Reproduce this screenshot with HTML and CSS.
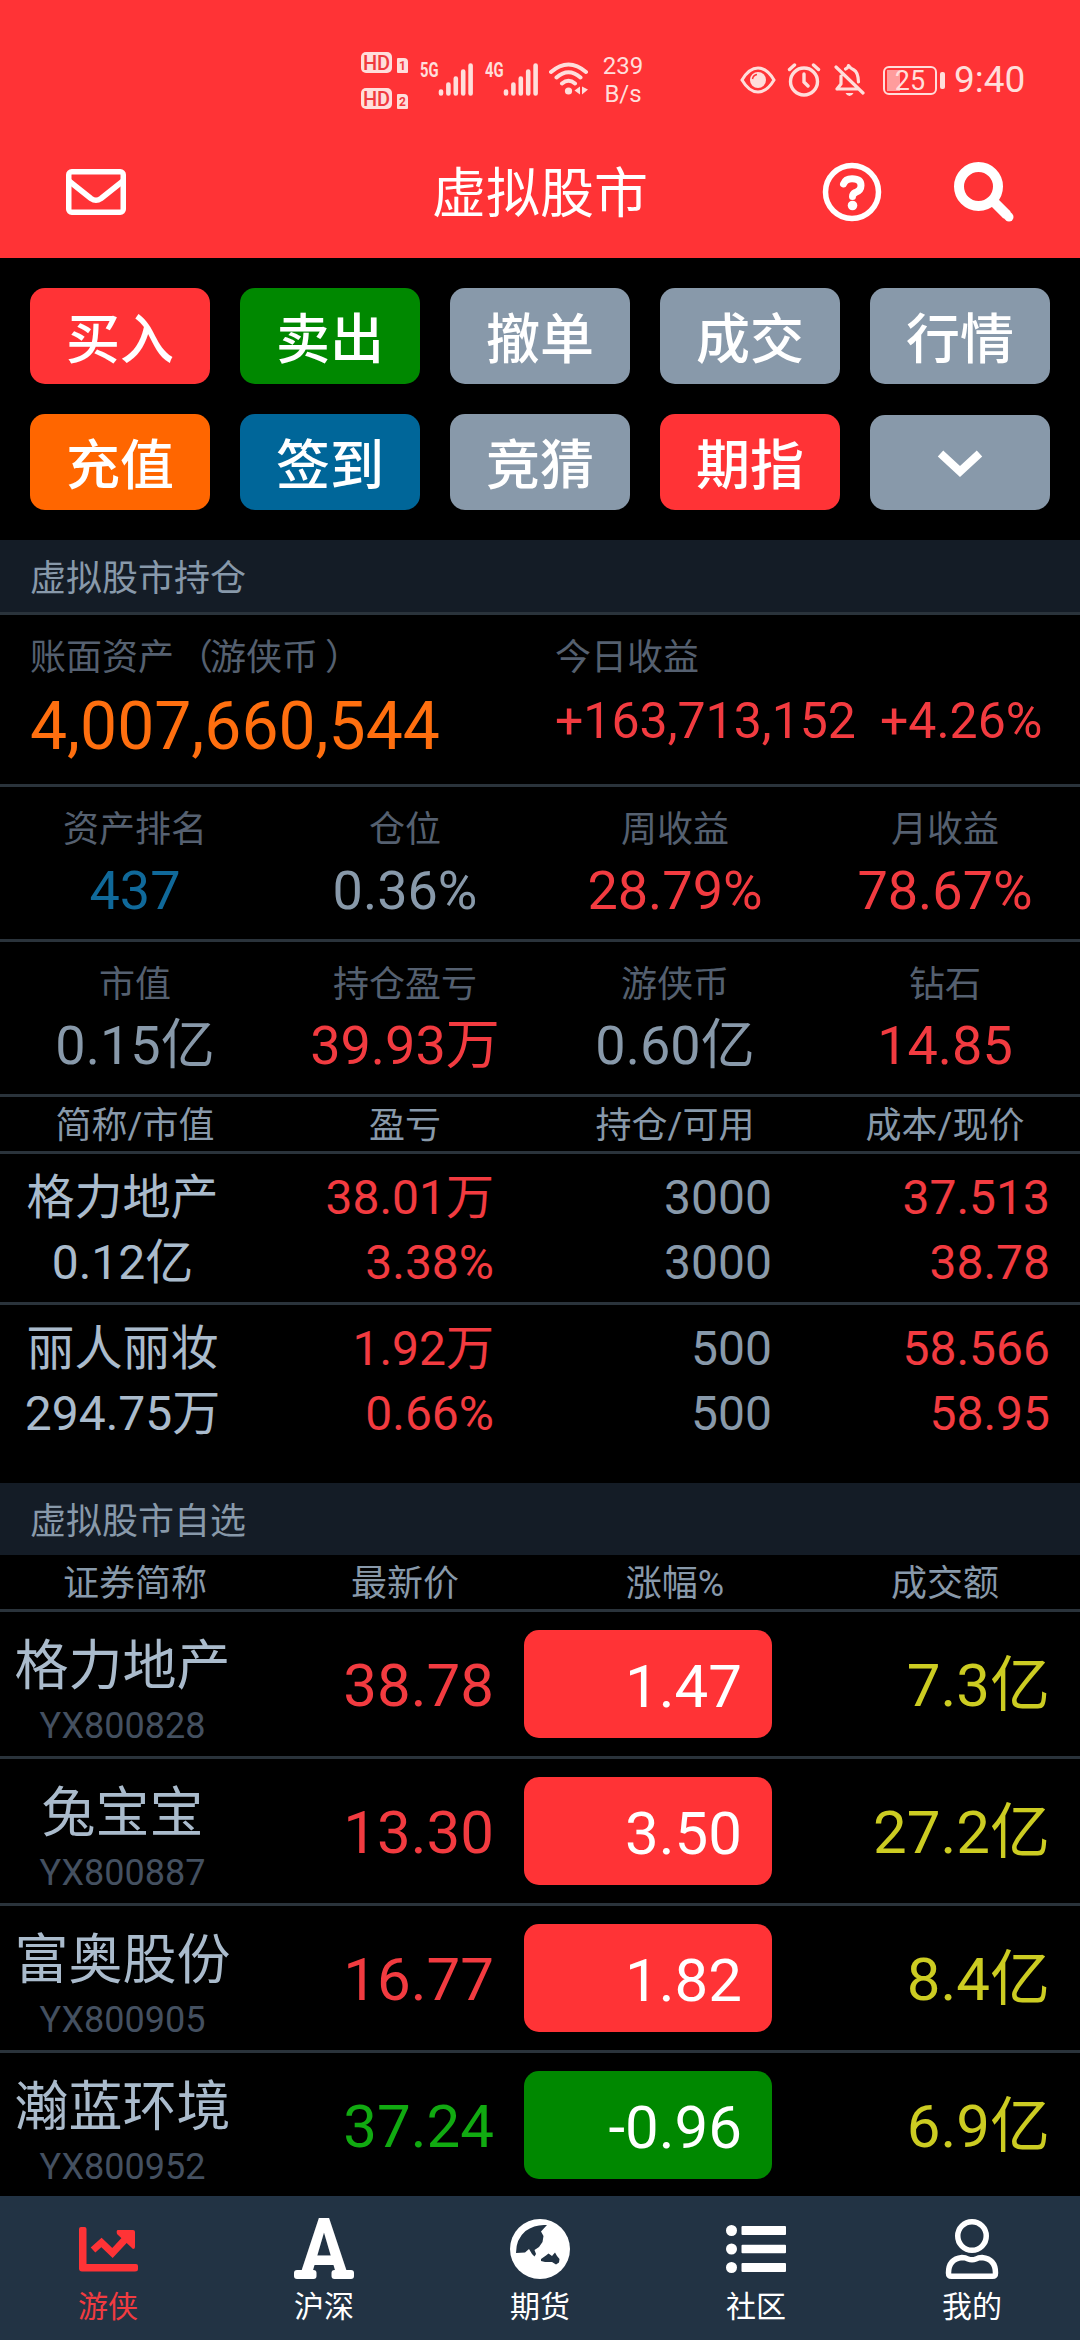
FILE: index.html
```html
<!DOCTYPE html>
<html lang="zh-CN">
<head>
<meta charset="utf-8">
<title>虚拟股市</title>
<link rel="stylesheet" href="styles.css">
</head>
<body>
<div class="app">
  <header class="header">
    <div class="status">
      <div class="sims">
        <div class="sim"><span class="hd">HD</span><span class="slot">1</span></div>
        <div class="sim"><span class="hd">HD</span><span class="slot">2</span></div>
      </div>
      <div class="signal"><span class="net">5G</span>
        <svg width="36" height="34" viewBox="0 0 36 34"><path d="M3 31.5v-2M10.4 31.5v-9M17.8 31.5v-15M25.2 31.5v-22M32.6 31.5v-28"/></svg></div>
      <div class="signal"><span class="net">4G</span>
        <svg width="36" height="34" viewBox="0 0 36 34"><path d="M3 31.5v-2M10.4 31.5v-9M17.8 31.5v-15M25.2 31.5v-22M32.6 31.5v-28"/></svg></div>
      <svg class="wifi" width="40" height="34" viewBox="0 0 40 34"><g fill="none" stroke="#ffdedb" stroke-width="4" stroke-linecap="round"><path d="M2 10Q19.500 -5 37 10M7.500 15.500Q19.500 5 31.500 15.500M13 21.500Q19.500 16 26 21.500"/></g><circle cx="19.500" cy="29" r="3.600" fill="#ffdedb"/><path d="M31 24.500v8l-5.500-4zM33 24.500v8l6-5z" fill="#ffdedb"/></svg>
      <div class="speed">239<br>B/s</div>
      <svg class="eye" width="36" height="28" viewBox="0 0 36 28"><path d="M2 14Q9 2 18 2T34 14Q27 26 18 26T2 14z" fill="none" stroke="#ffdedb" stroke-width="3"/><circle cx="18" cy="14" r="8" fill="#ffdedb"/><path d="M12.500 13q.8-4 4.500-4.500" fill="none" stroke="#ff3336" stroke-width="1.500"/></svg>
      <svg class="alarm" width="34" height="34" viewBox="0 0 34 34"><g fill="none" stroke="#ffdedb" stroke-width="3.400" stroke-linecap="round"><circle cx="17" cy="18.500" r="13.500"/><path d="M2.500 6.500L7.500 2M31.500 6.500L26.500 2M17 11v8l4 4"/></g></svg>
      <svg class="bell" width="32" height="34" viewBox="0 0 32 34"><g fill="none" stroke="#ffdedb" stroke-width="3.200" stroke-linecap="round" stroke-linejoin="round"><path d="M3 26h22M3 26l4-5V13M11.500 6Q14 5 14.500 2.500Q16 5 20 7Q24 9 24.500 19M2 4L29 30"/></g><path d="M11.500 30h8q-1.500 3-4 3t-4-3z" fill="#ffdedb"/></svg>
      <div class="battery"><span>25</span></div>
      <div class="clock">9:40</div>
    </div>
    <div class="bar">
      <svg class="mail" width="60" height="46" viewBox="0 0 60 46"><g fill="none" stroke="#fff" stroke-width="5.500" stroke-linejoin="round"><rect x="2.750" y="2.750" width="54.500" height="40.500" rx="3"/><path d="M3 12L25 29.500Q30 33 35 29.500L57 12"/></g></svg>
      <h1>虚拟股市</h1>
      <svg class="help" width="60" height="60" viewBox="0 0 60 60"><circle cx="30" cy="30" r="26.500" fill="none" stroke="#fff" stroke-width="5.500"/><path d="M21.500 22Q23.500 16.800 30 16.800Q39 16.800 39 23.500Q39 28.500 33.500 30.500Q30.500 32 30.500 34.500" fill="none" stroke="#fff" stroke-width="7" stroke-linecap="round"/><circle cx="30.500" cy="43.500" r="4.800" fill="#fff"/></svg>
      <svg class="search" width="61" height="61" viewBox="0 0 61 61"><g fill="none" stroke="#fff"><circle cx="24.500" cy="24.500" r="19.500" stroke-width="10"/><path d="M40 40L53 53" stroke-width="10"/><path d="M52 52L55 55" stroke-width="9" stroke-linecap="round"/></g></svg>
    </div>
  </header>

  <section class="actions">
    <a class="btn red">买入</a><a class="btn green">卖出</a><a class="btn">撤单</a><a class="btn">成交</a><a class="btn">行情</a>
    <a class="btn orange">充值</a><a class="btn blue">签到</a><a class="btn">竞猜</a><a class="btn red">期指</a>
    <a class="btn more"><svg width="50" height="34" viewBox="0 0 50 34"><path d="M5.500 7.500L25 25.500L44.500 7.500" fill="none" stroke="#fff" stroke-width="8"/></svg></a>
  </section>

  <h2 class="section ruled">虚拟股市持仓</h2>
  <section class="summary">
    <div><div class="label">账面资产<span class="open">（</span>游侠币<span class="close">）</span></div><div class="total">4,007,660,544</div></div>
    <div><div class="label">今日收益</div><div class="today"><span>+163,713,152</span><span>+4.26%</span></div></div>
  </section>
  <section class="stats">
    <div><div class="label">资产排名</div><div class="value t-blue">437</div></div>
    <div><div class="label">仓位</div><div class="value">0.36%</div></div>
    <div><div class="label">周收益</div><div class="value t-red">28.79%</div></div>
    <div><div class="label">月收益</div><div class="value t-red">78.67%</div></div>
  </section>
  <section class="stats">
    <div><div class="label">市值</div><div class="value">0.15亿</div></div>
    <div><div class="label">持仓盈亏</div><div class="value t-red">39.93万</div></div>
    <div><div class="label">游侠币</div><div class="value">0.60亿</div></div>
    <div><div class="label">钻石</div><div class="value t-red">14.85</div></div>
  </section>
  <div class="thead"><span>简称/市值</span><span>盈亏</span><span>持仓/可用</span><span>成本/现价</span></div>
  <section class="holdings">
    <div class="holding"><div class="name">格力地产<br>0.12亿</div><div class="t-red">38.01万<br>3.38%</div><div>3000<br>3000</div><div class="t-red">37.513<br>38.78</div></div>
    <div class="holding"><div class="name">丽人丽妆<br>294.75万</div><div class="t-red">1.92万<br>0.66%</div><div>500<br>500</div><div class="t-red">58.566<br>58.95</div></div>
  </section>

  <h2 class="section">虚拟股市自选</h2>
  <div class="thead"><span>证券简称</span><span>最新价</span><span>涨幅%</span><span>成交额</span></div>
  <section class="watch">
    <div class="stock"><div class="name">格力地产<small>YX800828</small></div><div class="t-red">38.78</div><div class="pct red">1.47</div><div class="vol">7.3亿</div></div>
    <div class="stock"><div class="name">兔宝宝<small>YX800887</small></div><div class="t-red">13.30</div><div class="pct red">3.50</div><div class="vol">27.2亿</div></div>
    <div class="stock"><div class="name">富奥股份<small>YX800905</small></div><div class="t-red">16.77</div><div class="pct red">1.82</div><div class="vol">8.4亿</div></div>
    <div class="stock"><div class="name">瀚蓝环境<small>YX800952</small></div><div class="t-green">37.24</div><div class="pct green">-0.96</div><div class="vol">6.9亿</div></div>
  </section>

  <nav class="tabs">
    <a class="active"><svg viewBox="0 0 60 60"><path d="M3 8h3.500Q8.500 8 8.500 10V45H58Q60 45 60 47V50Q60 52.500 57 52.500H4Q1 52.500 1 49.500V10Q1 8 3 8z" fill="#ff3336"/><path d="M15 31L23.500 23.500L34.500 34L47 20.500" fill="none" stroke="#ff3336" stroke-width="7"/><path d="M40 11H55Q57 11 57 13V28Q57 30 55 30L39 15Q38 11 40 11z" fill="#ff3336"/></svg>游侠</a>
    <a><svg viewBox="0 0 60 60"><text class="letter" x="30" y="59" text-anchor="middle" textLength="50" lengthAdjust="spacingAndGlyphs">A</text><g fill="#fff"><rect x="0" y="51" width="22.500" height="9" rx="3"/><rect x="37.500" y="51" width="22.500" height="9" rx="3"/></g></svg>沪深</a>
    <a><svg viewBox="0 0 60 60"><circle cx="30" cy="30" r="30" fill="#fff"/><path d="M37 6Q25 5 15.500 12Q6 20 6 34L15 33.500L19 30L22 35L24.500 37.500L26 35L24.500 31L29 28L32.500 23L33.500 17L31 12.500Z M31 40L36 36.500L38.500 34.500L42 37L45 33.500L47 37L49.500 40L49 43.500L46 45.500L42 43L35 43L31 42Z" fill="#223344"/></svg>期货</a>
    <a><svg viewBox="0 0 60 60"><g fill="#fff"><circle cx="5.500" cy="11.500" r="5.500"/><circle cx="5.500" cy="30" r="5.500"/><circle cx="5.500" cy="48.500" r="5.500"/><rect x="15.500" y="7" width="44.500" height="9" rx="1"/><rect x="15.500" y="25.800" width="44.500" height="8.500" rx="1"/><rect x="15.500" y="44" width="44.500" height="9" rx="1"/></g></svg>社区</a>
    <a><svg viewBox="0 0 60 60"><g fill="none" stroke="#fff" stroke-width="5.500"><circle cx="30" cy="17" r="14.250"/><path d="M20 38.500Q23.500 38.500 26 40Q30 41.500 34 40Q36.500 38.500 40 38.500Q53.500 40 53.500 54Q53.500 57.300 50.500 57.300H9.500Q6.500 57.300 6.500 54Q6.500 40 20 38.500z"/></g></svg>我的</a>
  </nav>
</div>
</body>
</html>
```
FILE: styles.css
```css
* { box-sizing: border-box; }
body { margin: 0; background: #000; }
.app {
  width: 1080px; height: 2340px; overflow: hidden;
  display: flex; flex-direction: column;
  font-family: Roboto, "Noto Sans CJK SC", sans-serif;
  color: #8899aa; background: #000;
}
.header { height: 258px; flex: none; background: #ff3336; color: #fff; }
svg { display: block; flex: none; }

/* Status line */
.status { height: 128px; padding: 32px 0 0 361px; display: flex; align-items: center; color: #ffdedb; }
.sims { width: 48px; display: flex; flex-direction: column; gap: 15px; margin-right: 11px; }
.sim { display: flex; align-items: flex-end; gap: 5px; }
.hd { width: 31px; height: 21px; border-radius: 5px; background: #ffdedb; color: #ef3a3e; font: 500 20px/22px Roboto, sans-serif; text-align: center; }
.slot { width: 11px; height: 15px; border-radius: 1px 4px 1px 1px; background: #ffdedb; color: #ef3a3e; font: 700 12px/16px Roboto, sans-serif; text-align: center; }
.signal { display: flex; align-items: flex-start; width: 65px; margin-top: -4px; }
.signal svg { margin-left: -2px; margin-top: 1px; }
.signal path { stroke: #ffdedb; stroke-width: 4.600; stroke-linecap: round; }
.net { width: 20px; font-size: 20px; line-height: 18px; font-weight: 700; display: block; transform: scaleX(.74); transform-origin: left; white-space: nowrap; }
.wifi { margin-left: -1px; margin-top: -2px; }
.speed { width: 60px; margin-left: 4px; font-size: 24px; line-height: 28px; text-align: center; margin-right: 87px; }
.alarm { margin-left: 11px; }
.bell { margin-left: 13px; }
.battery { position: relative; width: 54px; height: 29px; margin-left: 17px; border: 2px solid #ffdedb; border-radius: 6px; font-size: 27px; line-height: 26px; text-align: center; background: linear-gradient(#ff9c9c, #ff9c9c) 2px 2px / 13px 21px no-repeat; }
.battery::after { content: ""; position: absolute; left: 55px; top: 4px; width: 5px; height: 17px; border-radius: 2px; background: #ffdedb; }
.clock { margin-left: 17px; font-size: 37px; line-height: 44px; }

/* Title bar */
.bar { height: 128px; display: flex; align-items: center; padding: 0 0 0 66px; }
.bar h1 { flex: none; width: 216px; margin: 6px 174px 0 306px; font-size: 54px; line-height: 72px; font-weight: 400; white-space: nowrap; }
.search { margin-left: 72px; }

/* Actions */
.actions { flex: none; display: grid; grid-template-columns: repeat(5, 180px); gap: 30px; padding: 30px; height: 282px; }
.btn { display: flex; align-items: center; justify-content: center; height: 96px; padding-top: 10px; border-radius: 15px; background: #8899aa; color: #fff; font-size: 54px; font-weight: 500; line-height: 86px; }
.red { background: #ff3336; }
.green { background: #008800; }
.orange { background: #ff6600; }
.blue { background: #006699; }
.more { height: 95px; margin-top: 1px; padding-top: 0; }

.section { flex: none; margin: 0; height: 72px; padding-left: 30px; background: #141c26; color: #8899aa; font-size: 36px; line-height: 79px; font-weight: 400; }
.ruled { height: 75px; border-bottom: 3px solid #2a333b; }
.label { color: #556070; font-size: 36px; line-height: 50px; height: 48px; }
.open { margin: 0 -3px 0 3px; }
.close { margin-left: 7px; }

.summary { flex: none; display: grid; grid-template-columns: 525px 1fr; height: 172px; padding: 18px 0 0 30px; border-bottom: 3px solid #2a333b; }
.total { color: #ff6f0f; font-size: 66px; line-height: 91px; white-space: nowrap; }
.today { display: flex; gap: 24px; color: #f23b40; font-size: 50px; line-height: 80px; }

.stats { flex: none; display: grid; grid-template-columns: repeat(4, 1fr); height: 155px; padding-top: 18px; text-align: center; border-bottom: 3px solid #2a333b; }
.value { font-size: 54px; line-height: 75px; }
.t-blue { color: #10699a; }
.t-red { color: #f23b40; }
.t-green { color: #11aa11; }

.thead { flex: none; display: grid; grid-template-columns: repeat(4, 1fr); height: 57px; text-align: center; font-size: 36px; line-height: 59px; border-bottom: 3px solid #2a333b; }

.holdings { flex: none; height: 329px; }
.holding { display: grid; grid-template-columns: 245px 249px 278px 278px; height: 151px; padding-top: 11px; font-size: 48px; line-height: 65px; text-align: right; }
.holding + .holding { border-top: 3px solid #2a333b; }
.name { text-align: center; color: #aabbcc; }
.holdings .holding:first-child { height: 148px; }

.watch { flex: none; }
.stock { display: grid; grid-template-columns: 245px 249px 30px 248px 278px; height: 147px; align-items: center; font-size: 60px; line-height: 80px; text-align: right; border-bottom: 3px solid #2a333b; }
.stock .name { padding-top: 13px; font-size: 54px; line-height: 70px; }
.name small { display: block; color: #445060; font-size: 36px; line-height: 48px; }
.pct { grid-column: 4; height: 108px; line-height: 113px; padding-right: 30px; border-radius: 15px; color: #fff; }
.vol { color: #cccc22; }
.stock > .t-red, .stock > .t-green, .vol { padding-top: 4px; }
.stock:last-child { height: 144px; border-bottom: 0; }

.tabs { flex: none; display: grid; grid-template-columns: repeat(5, 1fr); height: 144px; margin-top: -1px; padding-top: 23px; background: #223344; color: #fff; font-size: 30px; line-height: 48px; }
.tabs a { display: flex; flex-direction: column; align-items: center; gap: 4px; }
.tabs svg { width: 60px; height: 60px; overflow: visible; }
.tabs .active { color: #f23b40; }
.letter { font: 700 83px Roboto, sans-serif; fill: #fff; }
```
